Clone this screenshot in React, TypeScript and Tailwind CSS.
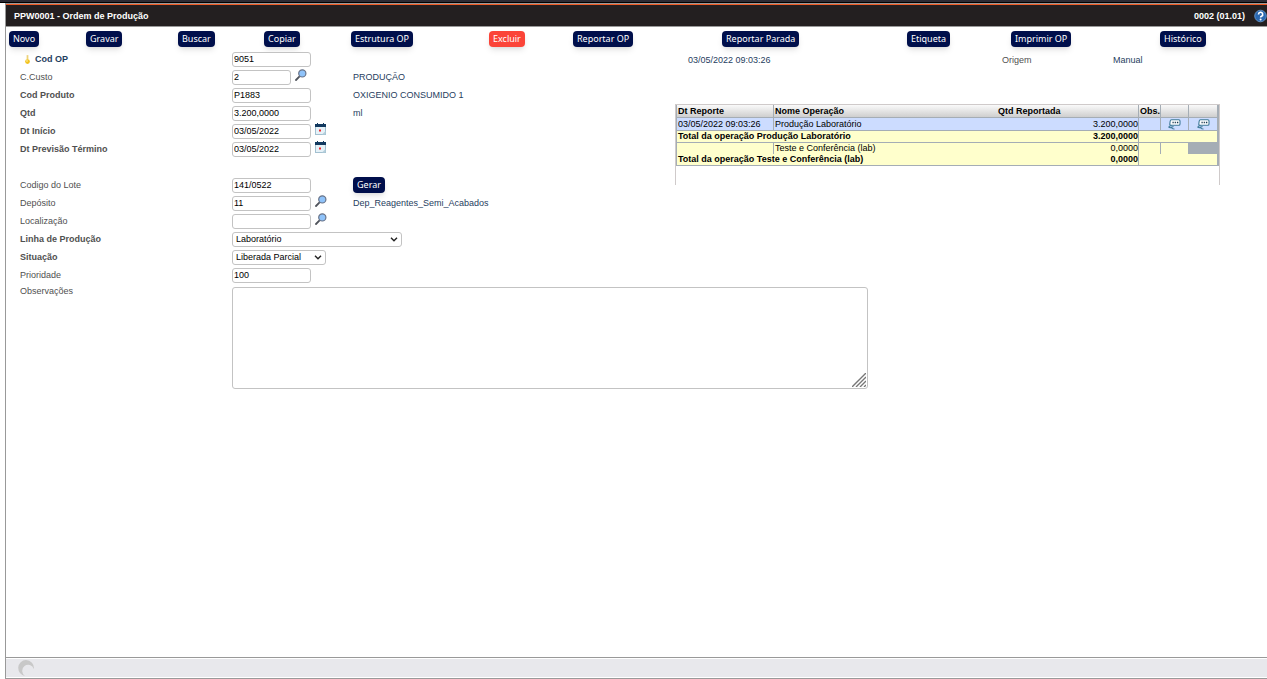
import React from 'react';

interface Operation {
  date: string;
  name: string;
  qty: string;
  selected?: boolean;
}

const operations: Operation[] = [
  { date: '03/05/2022 09:03:26', name: 'Produção Laboratório', qty: '3.200,0000', selected: true },
  { date: '', name: 'Teste e Conferência (lab)', qty: '0,0000' },
];

const actions = ['Novo', 'Gravar', 'Buscar', 'Copiar', 'Estrutura OP', 'Excluir', 'Reportar OP', 'Reportar Parada', 'Etiqueta', 'Imprimir OP', 'Histórico'];

function ActionButton({ label, danger }: { label: string; danger?: boolean }) {
  return (
    <button
      type="button"
      className={`h-4 shrink-0 rounded px-1 font-['Noto_Sans',sans-serif] text-[9px] leading-4 whitespace-nowrap text-white shadow-md ${danger ? 'bg-[#fb4438]' : 'bg-[#000f4b]'}`}
    >
      {label}
    </button>
  );
}

function SearchIcon() {
  return (
    <svg width="12" height="12" viewBox="0 0 12 12" fill="none">
      <path d="M1 11L4.8 7.2" stroke="#50545c" strokeWidth="1.8" strokeLinecap="round" />
      <circle cx="7.3" cy="4.4" r="3.6" fill="#8fc3fa" stroke="#6a7488" strokeWidth="1.2" />
    </svg>
  );
}

function CalendarIcon() {
  return (
    <svg width="11" height="12" viewBox="0 0 11 12">
      <rect x="0.5" y="2" width="10" height="9.5" fill="#e6f2f8" stroke="#a3c0d0" />
      <rect x="0" y="1" width="11" height="3" fill="#12395f" />
      <rect x="2" y="0" width="1" height="2" fill="#12395f" />
      <rect x="8" y="0" width="1" height="2" fill="#12395f" />
      <rect x="4" y="6.500" width="2" height="2" fill="#f0282d" />
      <path d="M7 11.500L10.500 8v3.500z" fill="#b5cfdc" />
    </svg>
  );
}

function KeyIcon() {
  return (
    <svg width="7" height="11" viewBox="0 0 8 11">
      <path d="M3 0.5h2v5H3z" fill="#ecd27a" />
      <circle cx="4" cy="7.8" r="2.7" fill="#f2c21d" />
      <circle cx="3.4" cy="7.2" r="1" fill="#fbe88b" />
    </svg>
  );
}

function ReportIcon() {
  return (
    <svg width="13" height="11" viewBox="0 0 13 11" fill="none">
      <path d="M3.500 0.800H10.800Q12 0.800 12 2V5Q12 6.300 10.800 6.300H3Q1.600 6.300 1.800 5L2.200 2Q2.400 0.800 3.500 0.800Z" fill="#fff" stroke="#3c7898" strokeWidth="1.1" />
      <path d="M4.500 3.600h1.200M6.700 3.600h1.200M8.900 3.600h1.400" stroke="#17384f" strokeWidth="1.5" />
      <path d="M3.500 6.500Q1 7 0.800 8.200Q2 9.300 3.500 8.300Q4 10.200 6.500 10M3.500 8.300L5.500 7.600" stroke="#3c7898" strokeWidth="1.1" />
    </svg>
  );
}

interface RowProps {
  label: string;
  id: string;
  bold?: boolean;
  keyField?: boolean;
  extra?: React.ReactNode;
  children: React.ReactNode;
}

function Row({ label, id, bold, keyField, extra, children }: RowProps) {
  return (
    <div className="flex h-[18px] items-center">
      <label htmlFor={id} className={`flex w-[212px] shrink-0 items-center gap-1 ${bold ? 'font-bold' : ''} ${keyField ? 'pl-1 text-[#1f4060]' : ''}`}>
        {keyField && <KeyIcon />}
        {label}
      </label>
      <div className="flex min-w-[121px] shrink-0 items-center gap-1">{children}</div>
      {extra && <div className="flex text-[#1f4060]">{extra}</div>}
    </div>
  );
}

function TextField({ id, value, narrow }: { id: string; value: string; narrow?: boolean }) {
  return (
    <input
      id={id}
      type="text"
      defaultValue={value}
      className={`h-[15px] rounded-[3px] border border-[#c3c3c3] bg-white px-px text-black outline-none ${narrow ? 'w-[59px]' : 'w-[79px]'}`}
    />
  );
}

function SelectField({ id, value, wide }: { id: string; value: string; wide?: boolean }) {
  return (
    <span className={`relative flex ${wide ? 'w-[170px]' : 'w-[94px]'}`}>
      <select id={id} className="h-[15px] w-full appearance-none rounded-[3px] border border-[#c3c3c3] bg-white px-[3px] text-black outline-none">
        <option>{value}</option>
      </select>
      <svg className="pointer-events-none absolute top-1 right-1" width="8" height="7" viewBox="0 0 8 7" fill="none">
        <path d="M1 1.8L4 4.8L7 1.8" stroke="#222" strokeWidth="1.4" />
      </svg>
    </span>
  );
}

function IconButton({ title, children }: { title: string; children: React.ReactNode }) {
  return (
    <button type="button" title={title} className="pb-1">
      {children}
    </button>
  );
}

function OperationsTable() {
  const head = 'h-3 border-b border-[#a5adb5] bg-linear-to-b from-[#fafafa] to-[#cfcfcf] p-0 pl-px text-left leading-3 whitespace-nowrap';
  return (
    <div className="mr-[47px] h-[81px] border-x border-t border-[#cfcaca]">
      <table className="w-full table-fixed border-separate border-spacing-0 border-r-2 border-l border-[#a5adb5] text-black">
        <colgroup>
          <col className="w-[97px]" />
          <col />
          <col className="w-[142px]" />
          <col className="w-[22px]" />
          <col className="w-[28px]" />
          <col className="w-[28px]" />
        </colgroup>
        <thead>
          <tr>
            <th className={`${head} border-r`}>Dt Reporte</th>
            <th className={head}>Nome Operação</th>
            <th className={`${head} border-r`}>Qtd Reportada</th>
            <th className={`${head} border-r`}>Obs.</th>
            <th className={`${head} border-r`}></th>
            <th className={head}></th>
          </tr>
        </thead>
        <tbody>
          {operations.map((op) => {
            const cell = `border-[#a5adb5] p-0 whitespace-nowrap ${op.selected ? 'h-[13px] border-b bg-[#ccdcff] leading-3' : 'h-[11px] bg-[#ffffcc] leading-[11px]'}`;
            const total = 'h-3 border-b border-[#a5adb5] bg-[#ffffcc] p-0 leading-[11px] whitespace-nowrap';
            return (
              <React.Fragment key={op.name}>
                <tr>
                  <td className={`${cell} border-r pl-px`}>{op.date}</td>
                  <td className={`${cell} pl-px`}>{op.name}</td>
                  <td className={`${cell} border-r text-right`}>{op.qty}</td>
                  <td className={`${cell} border-r`}></td>
                  <td className={`${cell} border-r`}>
                    {op.selected && <button type="button" title="Reportar" className="mx-auto flex"><ReportIcon /></button>}
                  </td>
                  {op.selected ? (
                    <td className={cell}><button type="button" title="Estornar" className="mx-auto flex"><ReportIcon /></button></td>
                  ) : (
                    <td className="bg-[#a5adb5] p-0"></td>
                  )}
                </tr>
                <tr className="font-bold">
                  <td colSpan={2} className={`${total} pl-px`}>Total da operação {op.name}</td>
                  <td className={`${total} border-r text-right`}>{op.qty}</td>
                  <td colSpan={3} className={total}></td>
                </tr>
              </React.Fragment>
            );
          })}
        </tbody>
      </table>
    </div>
  );
}

export default function App() {
  return (
    <div className="flex min-h-screen flex-col bg-white font-['Liberation_Sans',Arial,sans-serif] text-[9px] leading-3 text-[#505050]">
      <div className="h-[3px] border-b border-black bg-[#2b2a33]" />
      <div className="ml-[5px] flex flex-1 flex-col border border-r-0 border-[#999]">
        <header className="flex h-[23px] items-center border-t border-b border-t-[#f15a24] border-b-[#999] bg-[#231f20] pl-2 font-bold text-white">
          <h1 className="flex-1">PPW0001 - Ordem de Produção</h1>
          <span className="mr-[9px]">0002 (01.01)</span>
          <button type="button" title="Ajuda" className="flex">
            <svg width="13" height="14" viewBox="0 0 13 14">
              <circle cx="6.5" cy="7" r="5.8" fill="#2b68b0" stroke="#6f9fd4" strokeWidth="0.8" />
              <path d="M4.500 5.500a2.100 2.100 0 1 1 3 1.800c-.6.3-.9.6-.9 1.300" stroke="#fff" strokeWidth="1.600" fill="none" />
              <circle cx="6.600" cy="10.500" r="1" fill="#fff" />
            </svg>
          </button>
        </header>

        {/* Barra de ações */}
        <nav className="grid grid-cols-[77fr_92fr_86fr_87fr_138fr_84fr_149fr_185fr_104fr_149fr_107fr] pt-1 pl-[3px]">
          {actions.map((label) => (
            <div key={label} className="flex min-w-0">
              <ActionButton label={label} danger={label === 'Excluir'} />
            </div>
          ))}
        </nav>

        <main className="flex-1 pt-[3px] pl-[14px]">
          <div className="flex">
            <form className="w-[655px] shrink-0">
              <Row label="Cod OP" id="cod-op" bold keyField><TextField id="cod-op" value="9051" /></Row>
              <Row label="C.Custo" id="custo" extra="PRODUÇÃO">
                <TextField id="custo" value="2" narrow />
                <IconButton title="Pesquisar centro de custo"><SearchIcon /></IconButton>
              </Row>
              <Row label="Cod Produto" id="produto" bold extra="OXIGENIO CONSUMIDO 1"><TextField id="produto" value="P1883" /></Row>
              <Row label="Qtd" id="qtd" bold extra="ml"><TextField id="qtd" value="3.200,0000" /></Row>
              <Row label="Dt Início" id="inicio" bold>
                <TextField id="inicio" value="03/05/2022" />
                <IconButton title="Calendário"><CalendarIcon /></IconButton>
              </Row>
              <Row label="Dt Previsão Término" id="termino" bold>
                <TextField id="termino" value="03/05/2022" />
                <IconButton title="Calendário"><CalendarIcon /></IconButton>
              </Row>
              <div className="h-[18px]" />
              <Row label="Codigo do Lote" id="lote" extra={<ActionButton label="Gerar" />}><TextField id="lote" value="141/0522" /></Row>
              <Row label="Depósito" id="deposito" extra="Dep_Reagentes_Semi_Acabados">
                <TextField id="deposito" value="11" />
                <IconButton title="Pesquisar depósito"><SearchIcon /></IconButton>
              </Row>
              <Row label="Localização" id="local">
                <TextField id="local" value="" />
                <IconButton title="Pesquisar localização"><SearchIcon /></IconButton>
              </Row>
              <Row label="Linha de Produção" id="linha" bold><SelectField id="linha" value="Laboratório" wide /></Row>
              <Row label="Situação" id="situacao" bold><SelectField id="situacao" value="Liberada Parcial" /></Row>
              <Row label="Prioridade" id="prioridade"><TextField id="prioridade" value="100" /></Row>
            </form>

            <section className="min-w-0 flex-1">
              <div className="flex h-[54px] pt-1 pl-[13px]">
                <span className="w-[314px] text-[#1f4060]">03/05/2022 09:03:26</span>
                <span className="w-[111px]">Origem</span>
                <span className="text-[#1f4060]">Manual</span>
              </div>
              <OperationsTable />
            </section>
          </div>

          <div className="flex">
            <label htmlFor="obs" className="w-[212px] shrink-0 pt-px">Observações</label>
            <div className="relative mt-[3px] w-[636px]">
              <textarea id="obs" className="block h-[102px] w-full resize-none rounded-[3px] border border-[#c3c3c3] bg-white p-1 text-black outline-none" />
              <svg className="pointer-events-none absolute right-0.5 bottom-0.5" width="14" height="14" viewBox="0 0 14 14">
                <path d="M0 14L14 0M4 14L14 4M8 14L14 8M12 14L14 12" stroke="#777" strokeWidth="1.4" />
              </svg>
            </div>
          </div>
        </main>

        <footer className="border-t border-[#999] py-px">
          <div className="flex h-[18px] items-center bg-[#e8e8ec] pl-3">
            <svg width="16" height="16" viewBox="0 0 16 16">
              <path d="M8 0a8 8 0 0 0-1 15.900a6 6 0 1 1 8.900-7A8 8 0 0 0 8 0z" fill="#c8c8c8" />
            </svg>
          </div>
        </footer>
      </div>
    </div>
  );
}
